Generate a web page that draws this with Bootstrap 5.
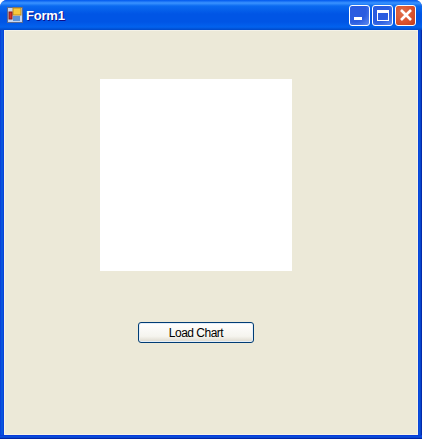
<!DOCTYPE html>
<html lang="en">
<head>
  <meta charset="UTF-8" />
  <meta name="viewport" content="width=device-width, initial-scale=1" />
  <title>Form1</title>
  <link href="https://cdn.jsdelivr.net/npm/bootstrap@5.3.0/dist/css/bootstrap.min.css" rel="stylesheet" />
  <style>
    html, body {
      height: 439px;
      overflow: hidden;
      background-color: #fff;
    }

    .xp-window {
      width: 422px;
      height: 439px;
      background: linear-gradient(to right, #0831d9 0, #0855dd 1px, #0855dd 3px, #0831d9 4px, #0831d9 418px, #0855dd 419px, #0742c8 421px, #00138c 422px);
      border-radius: 7px 7px 0 0;
      overflow: hidden;
    }

    .xp-titlebar {
      height: 30px;
      padding: 0 6px 0 7px;
      background: linear-gradient(to bottom, #0058ee 0, #3a93ff 3px, #0a6af0 6px, #0055e5 14px, #0055e5 22px, #0262ee 27px, #0049c8 30px);
    }

    .xp-title {
      font: bold 13px "Liberation Sans", sans-serif;
      letter-spacing: -0.2px;
      color: #fff;
      text-shadow: 1px 1px 0 #0f1089;
      margin-left: 3px;
    }

    .xp-btns {
      column-gap: 2px;
    }

    .xp-btn {
      width: 21px;
      height: 21px;
      border: 1px solid #fff;
      border-radius: 3px;
      background: radial-gradient(circle at 25% 25%, #2a5ce0, #2a5ce0 55%, #5f8cf0 100%);
    }

    .xp-btn svg {
      display: block;
    }

    .xp-btn-close {
      background: radial-gradient(circle at 35% 35%, #e0704c, #d9502c 60%, #c03a1a);
    }

    .xp-body {
      height: 405px;
      margin: 0 4px;
      padding-top: 49px;
      background-color: #ece9d8;
      box-shadow: inset 0 0 0 1px #f4f2e8;
    }

    .xp-bottom {
      height: 4px;
      background: linear-gradient(to bottom, #0831d9 0, #0855dd 2px, #0535c0 3px, #00138c 4px);
    }

    .chart-box {
      width: 192px;
      height: 192px;
      margin-left: 96px;
      background-color: #fff;
    }

    .load-btn {
      display: block;
      width: 116px;
      height: 21px;
      margin: 51px 0 0 134px;
      padding: 1px 0 0;
      font: 12px/18px "Liberation Sans", sans-serif;
      letter-spacing: -0.5px;
      color: #000;
      border: 1px solid #003c74;
      border-radius: 3px;
      background: linear-gradient(to bottom, #fff 0, #f5f4ee 70%, #dcd8cc 100%);
      box-shadow: inset 0 0 0 1px #e4eef8;
    }
  </style>
</head>
<body class="m-0">

<div class="xp-window">
  <div class="xp-titlebar d-flex align-items-center">
    <svg width="16" height="16" viewBox="0 0 16 16">
      <rect x="0.5" y="0.5" width="15" height="15" fill="#c9d6ee" stroke="#5a6a90" />
      <rect x="6" y="1" width="8" height="7" fill="#f7c93c" stroke="#c08a18" />
      <rect x="2" y="5" width="3" height="7" fill="#d8322a" stroke="#8a1a18" />
      <rect x="6" y="9" width="7" height="5" fill="#5f93d6" />
    </svg>
    <span class="xp-title">Form1</span>
    <div class="xp-btns d-flex ms-auto">
      <div class="xp-btn">
        <svg width="19" height="19" viewBox="0 0 19 19"><rect x="4" y="11" width="8" height="3" fill="#fff" /></svg>
      </div>
      <div class="xp-btn">
        <svg width="19" height="19" viewBox="0 0 19 19"><rect x="4.5" y="4.5" width="11" height="10" fill="none" stroke="#fff" /><rect x="4" y="4" width="12" height="3" fill="#fff" /></svg>
      </div>
      <div class="xp-btn xp-btn-close">
        <svg width="19" height="19" viewBox="0 0 19 19"><path d="M5 4 L15 14 M15 4 L5 14" stroke="#fff" stroke-width="2.6" /></svg>
      </div>
    </div>
  </div>
  <div class="xp-body">
    <div class="chart-box"></div>
    <button type="button" class="load-btn">Load Chart</button>
  </div>
  <div class="xp-bottom"></div>
</div>

</body>
</html>
